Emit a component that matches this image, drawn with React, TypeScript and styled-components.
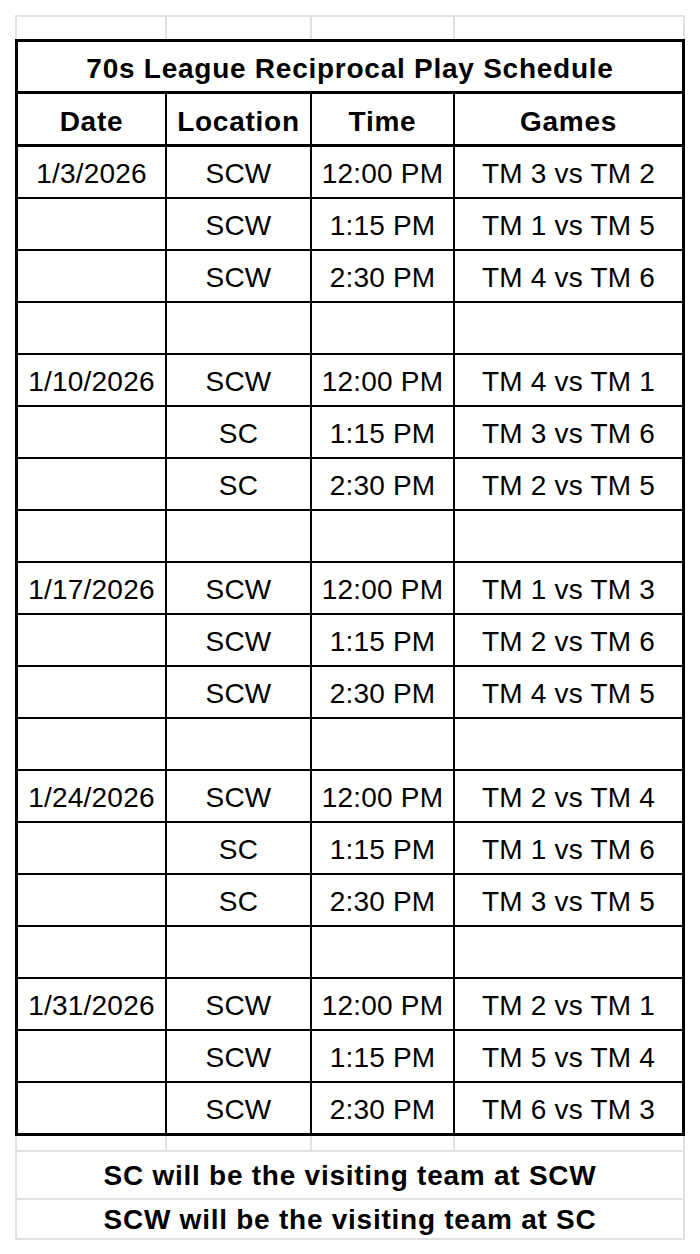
import React from 'react';
import styled, {createGlobalStyle} from 'styled-components';

type Game = [string, string, string];

type Week = {
  date: string,
  games: Game[],
};

const WEEKS: Week[] = [
  {date: '1/3/2026', games: [['SCW', '12:00 PM', 'TM 3 vs TM 2'], ['SCW', '1:15 PM', 'TM 1 vs TM 5'], ['SCW', '2:30 PM', 'TM 4 vs TM 6']]},
  {date: '1/10/2026', games: [['SCW', '12:00 PM', 'TM 4 vs TM 1'], ['SC', '1:15 PM', 'TM 3 vs TM 6'], ['SC', '2:30 PM', 'TM 2 vs TM 5']]},
  {date: '1/17/2026', games: [['SCW', '12:00 PM', 'TM 1 vs TM 3'], ['SCW', '1:15 PM', 'TM 2 vs TM 6'], ['SCW', '2:30 PM', 'TM 4 vs TM 5']]},
  {date: '1/24/2026', games: [['SCW', '12:00 PM', 'TM 2 vs TM 4'], ['SC', '1:15 PM', 'TM 1 vs TM 6'], ['SC', '2:30 PM', 'TM 3 vs TM 5']]},
  {date: '1/31/2026', games: [['SCW', '12:00 PM', 'TM 2 vs TM 1'], ['SCW', '1:15 PM', 'TM 5 vs TM 4'], ['SCW', '2:30 PM', 'TM 6 vs TM 3']]},
];

const HEADERS = ['Date', 'Location', 'Time', 'Games'];

const GRID = '#e1e1e1';

const App = () => {
  // flatten weeks into sheet rows, with an empty spacer row between weeks
  const rows: string[][] = [];
  WEEKS.forEach((week, i) => {
    if (i > 0) rows.push(['', '', '', '']);
    week.games.forEach((g, j) => rows.push([j === 0 ? week.date : '', ...g]));
  });

  return (
    <>
      <GlobalStyle/>
      <Sheet>
        <GridRow $height={24} $top>
          <GridCell/><GridCell/><GridCell/><GridCell/>
        </GridRow>
        <Table>
          <Title>70s League Reciprocal Play Schedule</Title>
          <Row $border={3}>
            {HEADERS.map(h => <Cell key={h} $bold>{h}</Cell>)}
          </Row>
          {rows.map((r, i) => (
            <Row key={i} $border={i === rows.length - 1 ? 0 : 2}>
              {r.map((v, j) => <Cell key={j}>{v}</Cell>)}
            </Row>
          ))}
        </Table>
        <GridRow $height={16}>
          <GridCell/><GridCell/><GridCell/><GridCell/>
        </GridRow>
        <Note $height={48}>SC will be the visiting team at SCW</Note>
        <Note $height={40}>SCW will be the visiting team at SC</Note>
      </Sheet>
    </>
  );
}

const GlobalStyle = createGlobalStyle`
  html, body {
    margin: 0;
    background: #fff;
  }
  body {
    font-family: "Liberation Sans", Arial, sans-serif;
    color: #000;
  }
`

const Sheet = styled.div`
  width: 670px;
  margin: 15px 0 0 15px;
  display: flex;
  flex-direction: column;
`

const GridRow = styled.div<{$height: number, $top?: boolean}>`
  box-sizing: border-box;
  height: ${p => p.$height}px;
  display: grid;
  grid-template-columns: 150px 145px 143px 230px;
  border-left: 2px solid ${GRID};
  border-top: ${p => p.$top ? `2px solid ${GRID}` : 'none'};
  border-bottom: ${p => p.$top ? 'none' : `2px solid ${GRID}`};
`

const GridCell = styled.div`
  border-right: 2px solid ${GRID};
`

const Table = styled.div`
  box-sizing: border-box;
  border: 3px solid #000;
  display: flex;
  flex-direction: column;
`

const Title = styled.div`
  box-sizing: border-box;
  height: 52px;
  border-bottom: 3px solid #000;
  display: flex;
  align-items: center;
  justify-content: center;
  padding-top: 4px;
  font-size: 28px;
  font-weight: bold;
  letter-spacing: 0.75px;
`

const Row = styled.div<{$border: number}>`
  box-sizing: border-box;
  height: ${p => 50 + p.$border}px;
  display: grid;
  grid-template-columns: 149px 145px 143px 227px;
  border-bottom: ${p => p.$border ? `${p.$border}px solid #000` : 'none'};
`

const Cell = styled.div<{$bold?: boolean}>`
  display: flex;
  align-items: center;
  justify-content: center;
  border-right: 2px solid #000;
  font-size: 28px;
  font-weight: ${p => p.$bold ? 'bold' : 'normal'};
  letter-spacing: ${p => p.$bold ? 0.75 : 0.2}px;
  padding-top: ${p => p.$bold ? 5 : 3}px;
  white-space: nowrap;
  &:last-child {
    border-right: none;
  }
`

const Note = styled.div<{$height: number}>`
  box-sizing: border-box;
  height: ${p => p.$height}px;
  border: 2px solid ${GRID};
  border-top: none;
  display: flex;
  align-items: center;
  justify-content: center;
  padding-top: 1px;
  font-size: 28px;
  font-weight: bold;
  letter-spacing: 0.75px;
`

export default App;
